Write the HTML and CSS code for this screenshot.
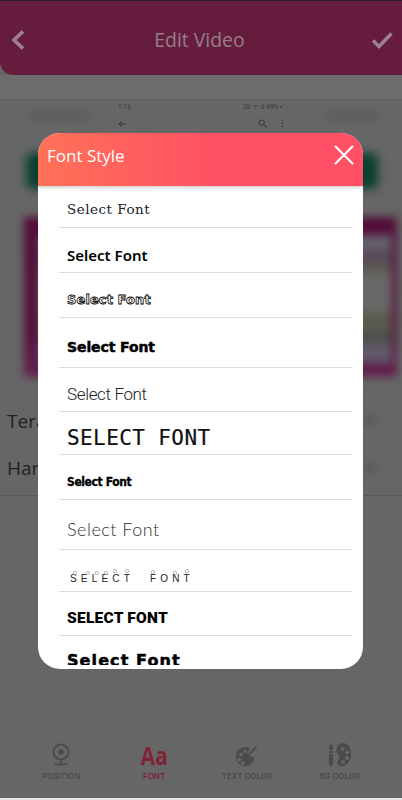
FILE: index.html
```html
<!DOCTYPE html>
<html lang="en">
<head>
<meta charset="utf-8">
<title>Edit Video</title>
<link rel="stylesheet" href="styles.css">
</head>
<body>
<div class="screen">
  <header class="appbar">
    <svg class="back" width="16" height="24" viewBox="0 0 16 24"><path d="M13 3.500 4 12l9 8.500" fill="none" stroke="#a08092" stroke-width="3.600"/></svg>
    <h1 class="appbar-title">Edit Video</h1>
    <svg class="check" width="22" height="18" viewBox="0 0 22 18"><path d="M2 9.500 8 15.500 20.500 2.500" fill="none" stroke="#a08092" stroke-width="3.400"/></svg>
  </header>
  <div class="subbar"></div>
  <main class="preview">
    <div class="status-row">
      <span class="ghost ghost-left"></span>
      <div class="phone-bar">
        <div class="phone-status"><span>1:13</span><span>28 ᯤ .ıl 49% ▪</span></div>
        <div class="phone-tools">
          <svg width="8" height="8" viewBox="0 0 8 8"><path d="M7.500 4H1M4 1 1 4l3 3" fill="none" stroke="#333" stroke-width="1"/></svg>
          <span class="phone-actions">
            <svg width="9" height="9" viewBox="0 0 9 9"><circle cx="3.700" cy="3.700" r="2.700" fill="none" stroke="#333"/><path d="M5.700 5.700 8.500 8.500" stroke="#333"/></svg>
            <svg width="3" height="9" viewBox="0 0 3 9"><path d="M1.500 1v1M1.500 4v1M1.500 7v1" stroke="#333" stroke-width="1.400"/></svg>
          </span>
        </div>
      </div>
      <span class="ghost ghost-right"></span>
    </div>
    <div class="green-btn"></div>
    <div class="video-card"><div class="video-inner"></div></div>
    <div class="text-row">Tera<span class="row-end"></span></div>
    <div class="text-row">Har<span class="row-end"></span></div>
  </main>
  <nav class="tabs">
    <div class="tab">
      <svg class="tab-icon" width="22" height="24" viewBox="0 0 22 24"><circle cx="11" cy="9" r="7.500" fill="none" stroke="#4b4b4b" stroke-width="2"/><circle cx="11" cy="9" r="2.700" fill="#4b4b4b"/><path d="M11 17v4M5 19.500c0 3 12 3 12 0" fill="none" stroke="#4b4b4b" stroke-width="1.600"/></svg>
      <span class="tab-label">POSITION</span>
    </div>
    <div class="tab tab-active">
      <span class="tab-aa">Aa</span>
      <span class="tab-label">FONT</span>
    </div>
    <div class="tab">
      <svg class="tab-icon" width="24" height="24" viewBox="0 0 24 24"><path fill-rule="evenodd" fill="#4b4b4b" d="M11 4C5 4 1 8 1 13.500S5 23 10.500 23c4.500 0 8-3 8.500-7 .3-2-2-2.500-3.500-2.500L12 10c0-2 3-2.500 2.500-4.500C14 4.500 12.500 4 11 4ZM6 9.500a2 2 0 1 0 .01 0ZM4.500 14.500a2 2 0 1 0 .01 0ZM8 18a2 2 0 1 0 .01 0ZM10 6.500a1.700 1.700 0 1 0 .01 0Z"/><path d="M13 12.500 21.500 3.500" stroke="#4b4b4b" stroke-width="2"/><path d="M22 1.500 23.500 0" stroke="#4b4b4b"/></svg>
      <span class="tab-label">TEXT COLOR</span>
    </div>
    <div class="tab">
      <svg class="tab-icon" width="24" height="24" viewBox="0 0 24 24"><path fill="#4b4b4b" d="M3 0 5 4v3H1V4ZM1 8h4v2H1ZM1 11h4v9.500L3 24 1 20.500Z"/><path fill-rule="evenodd" fill="#4b4b4b" d="M15 0c5 0 8 5 8 11 0 7-4 12-9 12-3 0-5-2-4.500-4.500.5-2 2-2.500 2-4.500s-3-3-3-6C8.500 4 11 0 15 0ZM14.500 4a2 2 0 1 0 .01 0ZM19 7.500a2 2 0 1 0 .01 0ZM19 13a2 2 0 1 0 .01 0ZM15 17a2 2 0 1 0 .01 0Z"/></svg>
      <span class="tab-label">BG COLOR</span>
    </div>
  </nav>
  <div class="home-edge"></div>

  <section class="dialog">
    <div class="dialog-head">
      <h2 class="dialog-title">Font Style</h2>
      <svg width="20" height="20" viewBox="0 0 20 20"><path d="M1 1 19 19M19 1 1 19" stroke="#fff" stroke-width="2.200" fill="none"/></svg>
    </div>
    <ul class="font-list">
      <li class="font-row h42 row-first"><span class="f1">Select Font</span></li>
      <li class="font-row h45"><span class="f2">Select Font</span></li>
      <li class="font-row h45"><span class="f3">Select Font</span></li>
      <li class="font-row h50"><span class="f4">Select Font</span></li>
      <li class="font-row h44"><span class="f5">Select Font</span></li>
      <li class="font-row h43"><span class="f6">SELECT FONT</span></li>
      <li class="font-row h45"><span class="f7">Select Font</span></li>
      <li class="font-row h50"><span class="f8">Select Font</span></li>
      <li class="font-row h42 row-low"><span class="f9">SELECT FONT<svg class="rings" width="124" height="8" viewBox="0 0 124 8"><g fill="none" stroke="#999" stroke-width=".7"><circle cx="6" cy="4" r="1.700"/><circle cx="18.700" cy="4" r="1.700"/><circle cx="27.700" cy="4" r="1.700"/><circle cx="37" cy="4" r="1.700"/><circle cx="46" cy="2" r="1.700"/><circle cx="58.300" cy="2" r="1.700"/><circle cx="84" cy="3" r="1.700"/><circle cx="106" cy="4" r="1.700"/><circle cx="118" cy="2" r="1.700"/></g></svg></span></li>
      <li class="font-row h44"><span class="f10">SELECT FONT</span></li>
      <li class="font-row last"><span class="f11">Select Font</span></li>
    </ul>
  </section>
</div>
</body>
</html>
```

FILE: styles.css
```css
* { box-sizing: border-box; }
html, body { margin: 0; padding: 0; }
body { background: #666; font-family: "Open Sans", sans-serif; }

.screen {
  position: relative;
  width: 402px;
  height: 800px;
  overflow: hidden;
  background: #666;
  display: flex;
  flex-direction: column;
}

/* App bar */
.appbar {
  flex: none;
  height: 75px;
  background: #661d3d;
  border-top: 1px solid #2e1a24;
  border-bottom-left-radius: 14px;
  display: flex;
  align-items: center;
  justify-content: space-between;
  padding: 3px 9px 0 10px;
  box-shadow: 0 1px 2px rgba(0,0,0,.15);
}
.appbar-title {
  margin: 0;
  font-size: 19.400px;
  font-weight: 400;
  color: #967d8b;
  transform: translateX(1px);
}

.subbar {
  flex: none;
  height: 25px;
  background: #6c6c6c;
  border-bottom: 1px solid #5e5e5e;
}

/* Dimmed screen content */
.preview {
  flex: 1;
  display: flex;
  flex-direction: column;
  min-height: 0;
  border-bottom: 1px solid #575757;
}
.status-row {
  display: grid;
  grid-template-columns: 118px 170px 1fr;
  height: 32px;
}
.ghost {
  height: 8px;
  margin-top: 12px;
  background: #5d5d5d;
  filter: blur(3px);
}
.ghost-left { width: 62px; margin-left: 28px; }
.ghost-right { width: 54px; margin-left: 38px; }
.phone-bar { padding-top: 3px; display: flex; flex-direction: column; gap: 7px; }
.phone-status {
  display: flex;
  justify-content: space-between;
  font-family: "Roboto", sans-serif;
  font-size: 6.500px;
  line-height: 9px;
  color: #3c3c3c;
  padding-right: 6px;
}
.phone-tools { display: flex; justify-content: space-between; align-items: center; padding-right: 4px; }
.phone-actions { display: flex; gap: 14px; align-items: center; }

.green-btn {
  flex: none;
  height: 36px;
  margin: 21px 24px 0 26px;
  background: #0a4031;
  border-radius: 6px;
  filter: blur(5px);
}
.video-card {
  flex: none;
  height: 160px;
  margin: 28px 5px 0 24px;
  background: linear-gradient(#530c39, #560f3e 70%, #62214f);
  filter: blur(4px);
  padding: 18px 5px 14px 15px;
}
.video-inner {
  height: 100%;
  background: linear-gradient(#64606a 0 12%, #584a5c 12% 22%, #5b5a4f 22% 30%, #686868 30% 60%, #5a5b4e 60% 76%, #4a4f4a 76% 84%, #625868 84%);
}
.text-row {
  flex: none;
  height: 47px;
  display: flex;
  align-items: center;
  justify-content: space-between;
  padding-left: 7px;
  font-size: 19px;
  color: #1f1f1f;
  line-height: 26px;
}
.video-card + .text-row { margin-top: 20px; }
.row-end {
  width: 12px;
  height: 10px;
  margin-right: 26px;
  background: #5c5c5c;
  filter: blur(3px);
}

/* Bottom tabs */
.tabs {
  flex: none;
  height: 302px;
  padding: 0 16px 16px 15px;
  display: grid;
  grid-template-columns: repeat(4, 1fr);
  align-items: end;
  justify-items: center;
}
.tab {
  display: flex;
  flex-direction: column;
  align-items: center;
  gap: 3px;
  width: 86px;
}
.tab-icon { display: block; }
.tab-label {
  font-family: "Inter", sans-serif;
  font-size: 8px;
  line-height: 12px;
  font-weight: 600;
  color: #4b4b4b;
  white-space: nowrap;
}
.tab-active .tab-label { color: #7f2437; }
.tab-aa {
  font-size: 25px;
  line-height: 24px;
  font-weight: 700;
  color: #7f2437;
  transform: scaleX(.84);
}
.home-edge { flex: none; height: 2px; background: #e6e6e6; }

/* Dialog */
.dialog {
  position: absolute;
  left: 38px;
  top: 133px;
  width: 325px;
  height: 536px;
  background: #fff;
  border-radius: 22px;
  overflow: hidden;
  display: flex;
  flex-direction: column;
  padding-bottom: 4px;
}
.dialog-head {
  flex: none;
  height: 53px;
  padding: 0 9px 9px 9px;
  display: flex;
  align-items: center;
  justify-content: space-between;
  background: linear-gradient(90deg, #ff7257 0%, #ff5064 55%, #ff5066 100%);
  box-shadow: 0 1px 4px rgba(0,0,0,.25);
  position: relative;
}
.dialog-title {
  margin: 0;
  font-size: 17px;
  font-weight: 400;
  color: #fff;
}
.font-list {
  list-style: none;
  margin: 0;
  padding: 0 11px 0 21px;
  flex: 1;
  min-height: 0;
  overflow: hidden;
}
.font-row {
  display: flex;
  align-items: center;
  padding: 9px 0 0 8px;
  border-bottom: 1.500px solid #dcdcdc;
  color: #000;
  white-space: nowrap;
}
.h42 { height: 42px; }
.h43 { height: 43px; }
.h44 { height: 44px; }
.h45 { height: 45px; }
.h50 { height: 50px; }
.row-first { padding-top: 4px; }
.row-low { padding-top: 16px; }
.last { height: 40px; border-bottom: 0; align-items: flex-start; padding-top: 15px; }

.f1 { font-family: "DejaVu Serif", serif; font-size: 13.500px; letter-spacing: .5px; color: #222; }
.f2 { font-family: "Noto Sans", sans-serif; font-size: 15px; font-weight: 600; }
.f3 { font-family: "DejaVu Sans", sans-serif; font-size: 13px; font-weight: 700; color: #fff; -webkit-text-stroke: .8px #000; letter-spacing: .1px; }
.f4 { font-family: "DejaVu Sans", sans-serif; font-size: 14px; font-weight: 700; -webkit-text-stroke: .5px #000; letter-spacing: -.1px; }
.f5 { font-family: "Roboto", sans-serif; font-size: 17px; font-weight: 300; letter-spacing: -.35px; color: #222; }
.f6 { font-family: "DejaVu Sans Mono", monospace; font-size: 21px; letter-spacing: .4px; color: #111; -webkit-text-stroke: .2px #111; }
.f7 { font-family: "DejaVu Sans", sans-serif; font-stretch: condensed; font-size: 12px; font-weight: 700; -webkit-text-stroke: .3px #000; letter-spacing: -.4px; }
.f8 { font-family: "Lato", sans-serif; font-size: 18px; font-weight: 300; letter-spacing: .5px; color: #333; }
.f9 { position: relative; display: inline-block; font-family: "Liberation Sans", sans-serif; font-size: 10px; letter-spacing: 4.200px; word-spacing: 9px; color: #222; margin-left: 3px; }
.rings { position: absolute; left: -1px; top: -4px; }
.f10 { font-family: "Roboto", sans-serif; font-size: 15.500px; font-weight: 900; letter-spacing: .25px; }
.f11 { font-family: "DejaVu Sans", sans-serif; font-size: 16px; font-weight: 700; letter-spacing: 1.100px; -webkit-text-stroke: .5px #000; }
```
